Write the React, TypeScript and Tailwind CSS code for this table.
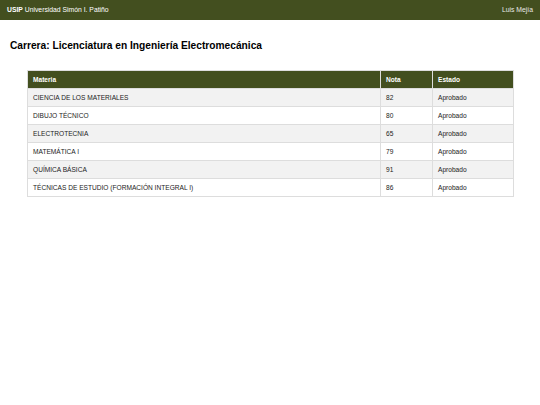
const ROWS = [
  { materia: "CIENCIA DE LOS MATERIALES", nota: 82, estado: "Aprobado" },
  { materia: "DIBUJO TÉCNICO", nota: 80, estado: "Aprobado" },
  { materia: "ELECTROTECNIA", nota: 65, estado: "Aprobado" },
  { materia: "MATEMÁTICA I", nota: 79, estado: "Aprobado" },
  { materia: "QUÍMICA BÁSICA", nota: 91, estado: "Aprobado" },
  { materia: "TÉCNICAS DE ESTUDIO (FORMACIÓN INTEGRAL I)", nota: 86, estado: "Aprobado" },
];

export default function App() {
  return (
    <div className="min-h-screen bg-white font-['Liberation_Sans',Arial,sans-serif] text-[#222]">
      <header className="flex h-[20px] items-center justify-between bg-[#434f1f] px-[7px] text-[6.8px] text-white">
        <div>
          <span className="font-bold">USIP</span> Universidad Simón I. Patiño
        </div>
        <div className="text-[#e8e8e8]">Luis Mejía</div>
      </header>

      <main className="px-[10px] pt-[20px]">
        <h1 className="text-[10.2px] font-bold leading-[12px] text-black">
          Carrera: Licenciatura en Ingeniería Electromecánica
        </h1>

        <div className="mx-[17px] mt-[18px]">
          <table className="w-[486px] table-fixed border-collapse border border-[#ddd] text-[6.6px]">
            <colgroup>
              <col className="w-[353px]" />
              <col className="w-[52px]" />
              <col className="w-[81px]" />
            </colgroup>
            <thead>
              <tr className="h-[18px] bg-[#434f1f] text-left font-bold text-white">
                <th className="border border-[#ddd] px-[5px] py-0">Materia</th>
                <th className="border border-[#ddd] px-[5px] py-0">Nota</th>
                <th className="border border-[#ddd] px-[5px] py-0">Estado</th>
              </tr>
            </thead>
            <tbody>
              {ROWS.map((r, i) => (
                <tr key={r.materia} className={`h-[18px] ${i % 2 === 0 ? "bg-[#f2f2f2]" : "bg-white"}`}>
                  <td className="border border-[#ddd] px-[5px] py-0">{r.materia}</td>
                  <td className="border border-[#ddd] px-[5px] py-0">{r.nota}</td>
                  <td className="border border-[#ddd] px-[5px] py-0">{r.estado}</td>
                </tr>
              ))}
            </tbody>
          </table>
        </div>
      </main>
    </div>
  );
}
